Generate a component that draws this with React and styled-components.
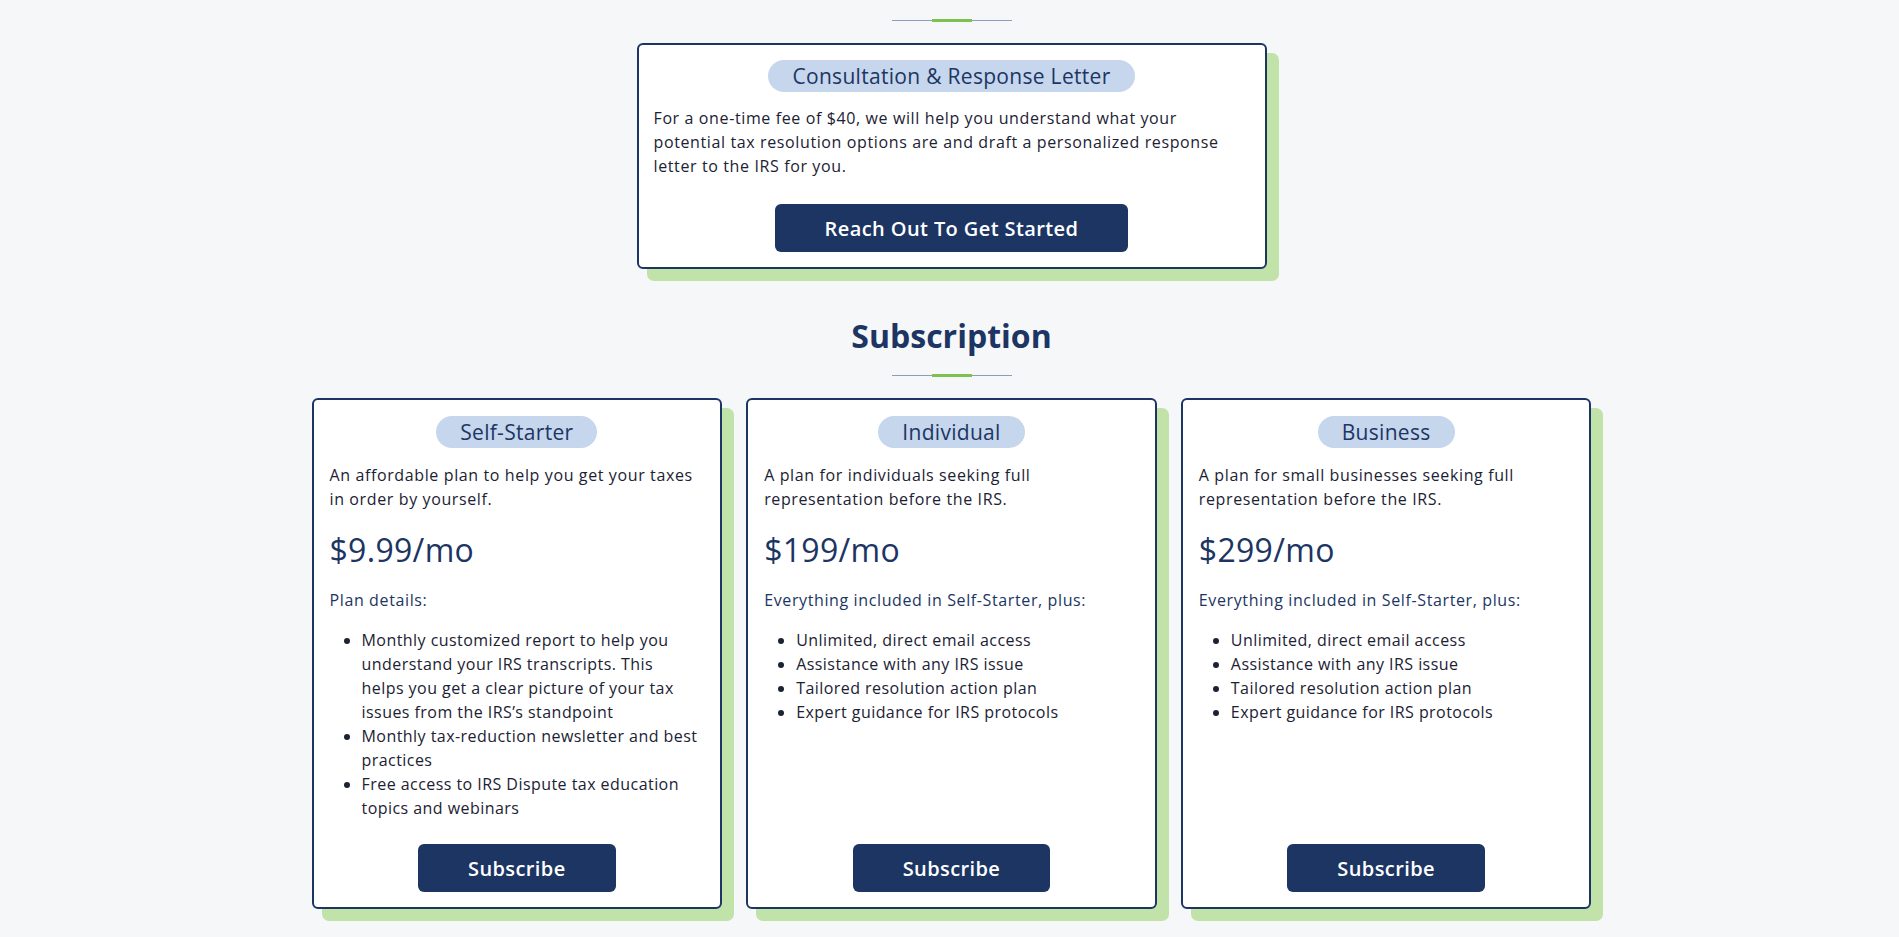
import React from "react";
import styled, { createGlobalStyle } from "styled-components";

const NAVY = "#1c3563";

const GlobalStyle = createGlobalStyle`
  * {
    box-sizing: border-box;
  }
  body {
    margin: 0;
    background: #f6f7f9;
    font-family: "Open Sans", "Liberation Sans", sans-serif;
    color: #1b2233;
  }
`;

const Page = styled.main`
  display: flex;
  flex-direction: column;
  align-items: center;
  padding: 19px 0 40px 4px;
`;

const Divider = styled.div`
  display: flex;
  align-items: center;
  width: 120px;
  height: 3px;
`;

const DividerLine = styled.span`
  flex: 1;
  height: 1px;
  background: #8e9cb5;
`;

const DividerAccent = styled.span`
  width: 40px;
  height: 3px;
  background: #7dc24f;
`;

const Card = styled.div`
  display: flex;
  flex-direction: column;
  align-items: ${(props) => (props.centered ? "center" : "stretch")};
  background: #fff;
  border: 2px solid ${NAVY};
  border-radius: 6px;
  box-shadow: 11px 11px 0 1px #c1e2a9;
  padding: 15px ${(props) => (props.centered ? "15px" : "16px")};
`;

const TopCard = styled(Card)`
  width: 630px;
  margin-top: 21px;
`;

const Pill = styled.div`
  align-self: center;
  display: inline-flex;
  align-items: center;
  height: 32px;
  padding: 0 24px;
  border-radius: 16px;
  background: #c6d6ec;
  color: ${NAVY};
  font-size: 21px;
  letter-spacing: 0.3px;
  white-space: nowrap;
`;

const Text = styled.p`
  align-self: stretch;
  margin: ${(props) => props.gap || 15}px 0 0;
  font-size: 16px;
  line-height: 24px;
  letter-spacing: 0.62px;
  color: ${(props) => (props.accent ? NAVY : "#1b2233")};
`;

const Button = styled.button`
  align-self: center;
  height: 48px;
  padding: 0 50px;
  margin-top: ${(props) => (props.push ? "auto" : "26px")};
  border: none;
  border-radius: 6px;
  background: ${NAVY};
  color: #fff;
  font-family: inherit;
  font-size: 20px;
  font-weight: 600;
  letter-spacing: 0.4px;
  cursor: pointer;
`;

const Heading = styled.h2`
  margin: 47px 0 18px;
  font-size: 32px;
  line-height: 40px;
  font-weight: 700;
  color: ${NAVY};
`;

const Plans = styled.div`
  display: grid;
  grid-template-columns: repeat(3, 1fr);
  gap: 24px;
  width: 1280px;
  margin-top: 21px;
`;

const PlanCard = styled(Card)`
  min-height: 511px;
  padding-top: 16px;
`;

const Price = styled.div`
  margin-top: 19px;
  font-size: 32px;
  line-height: 40px;
  font-weight: 500;
  letter-spacing: 0.3px;
  color: ${NAVY};
`;

const Features = styled.ul`
  margin: 16px 0 24px;
  padding-left: 32px;
  font-size: 16px;
  line-height: 24px;
  letter-spacing: 0.45px;
`;

const plans = [
  {
    name: "Self-Starter",
    desc: "An affordable plan to help you get your taxes in order by yourself.",
    price: "$9.99/mo",
    label: "Plan details:",
    items: [
      "Monthly customized report to help you understand your IRS transcripts. This helps\u00a0you get a clear picture of your tax issues from the IRS\u2019s standpoint",
      "Monthly tax-reduction newsletter and best practices",
      "Free access to IRS Dispute tax education topics and webinars",
    ],
  },
  {
    name: "Individual",
    desc: "A plan for individuals seeking full representation before the IRS.",
    price: "$199/mo",
    label: "Everything included in Self-Starter, plus:",
    items: [
      "Unlimited, direct email access",
      "Assistance with any IRS issue",
      "Tailored resolution action plan",
      "Expert guidance for IRS protocols",
    ],
  },
  {
    name: "Business",
    desc: "A plan for small businesses seeking full representation before the IRS.",
    price: "$299/mo",
    label: "Everything included in Self-Starter, plus:",
    items: [
      "Unlimited, direct email access",
      "Assistance with any IRS issue",
      "Tailored resolution action plan",
      "Expert guidance for IRS protocols",
    ],
  },
];

const SectionDivider = () => (
  <Divider>
    <DividerLine />
    <DividerAccent />
    <DividerLine />
  </Divider>
);

const App = () => {
  return (
    <>
      <GlobalStyle />
      <Page>
        <SectionDivider />
        <TopCard centered>
          <Pill>Consultation &amp; Response Letter</Pill>
          <Text gap={14}>
            For a one-time fee of $40, we will help you understand what your
            potential tax resolution options are and draft a personalized
            response letter to the IRS for you.
          </Text>
          <Button>Reach Out To Get Started</Button>
        </TopCard>

        <Heading>Subscription</Heading>
        <SectionDivider />

        <Plans>
          {plans.map((plan) => (
            <PlanCard key={plan.name}>
              <Pill>{plan.name}</Pill>
              <Text>{plan.desc}</Text>
              <Price>{plan.price}</Price>
              <Text accent gap={18}>
                {plan.label}
              </Text>
              <Features>
                {plan.items.map((item) => (
                  <li key={item}>{item}</li>
                ))}
              </Features>
              <Button push>Subscribe</Button>
            </PlanCard>
          ))}
        </Plans>
      </Page>
    </>
  );
};

export default App;
